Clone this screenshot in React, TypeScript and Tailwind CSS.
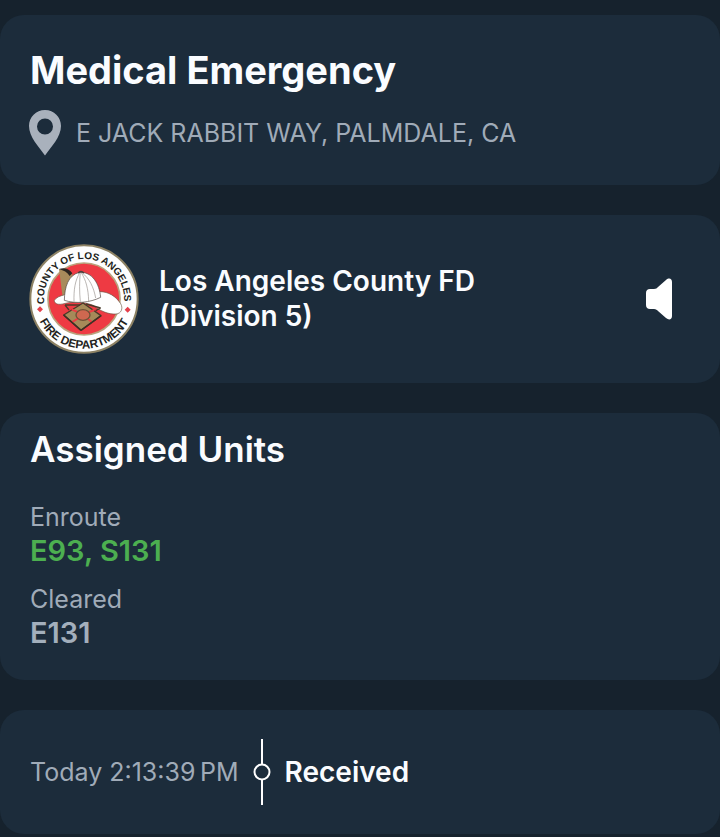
import type { ReactNode } from 'react';

const units = [
    { status: 'Enroute', names: 'E93, S131', color: 'text-[#4caf50]' },
    { status: 'Cleared', names: 'E131', color: 'text-[#a3afbc]' },
];

const Card = ({ children, className }: { children: ReactNode; className: string }) => (
    <section className={`rounded-3xl bg-[#1c2c3b] px-[30px] ${className}`}>{children}</section>
);

const PinIcon = () => (
    <svg viewBox="1 0 32 46" className="h-[46px] w-8 shrink-0 overflow-visible" fill="#a9b1bc" aria-hidden="true">
        <path
            fillRule="evenodd"
            d="M16 0C7 0 0 7 0 16c0 11 10 21 16 29.500C22 37 32 27 32 16 32 7 25 0 16 0Zm0 8.500a8 8 0 1 1 0 16 8 8 0 0 1 0-16Z"
        />
    </svg>
);

const SpeakerIcon = () => (
    <svg viewBox="0 0 28 42" className="h-[42px] w-7" fill="#fff" aria-hidden="true">
        <path d="M5 11h4c2 0 3-1 4-2l8-7c3-2.500 6-1.500 6 2v34c0 3.500-3 4.500-6 2l-8-7c-1-1-2-2-4-2H5c-2.500 0-4-1.500-4-4V15c0-2.500 1.500-4 4-4Z" />
    </svg>
);

const DepartmentSeal = () => (
    <svg viewBox="30 25 330 330" className="size-[110px] shrink-0 overflow-visible" role="img" aria-label="County of Los Angeles Fire Department">
        <defs>
            <path id="seal-top" d="M72 190a120 120 0 1 1 240 0a120 120 0 0 1-240 0" transform="rotate(-7 192 190)" />
            <path id="seal-bottom" d="M43 190a149 149 0 0 0 298 0" />
        </defs>
        <circle cx="192" cy="190" r="161" fill="#fefefe" stroke="#8d8264" strokeWidth="6" />
        <circle cx="192" cy="190" r="108" fill="#ee3a43" stroke="#b9a27c" strokeWidth="5" />
        <g fill="#231f20" fontFamily="Liberation Sans, Arial, sans-serif" fontWeight="700">
            <text fontSize="30">
                <textPath href="#seal-top">COUNTY OF LOS ANGELES</textPath>
            </text>
            <text fontSize="35" textAnchor="middle">
                <textPath href="#seal-bottom" startOffset="50%">FIRE DEPARTMENT</textPath>
            </text>
        </g>
        <path d="M60 212l9 9-9 9-9-9ZM323 213l9 9-9 9-9-9Z" fill="#e5404b" />

        {/* Helmet */}
        <path d="M117 100l27 4 14 13-17 78-12-2Z" fill="#a88b5b" />
        <path d="M117 100c15-5 30-2 40 13l-8 8c-7-11-18-17-32-21Z" fill="#2b2520" />
        <path d="M103 194c7-10 17-13 32-17l105-9c25 0 48 14 62 36 8 14 2 30-14 31-23 2-49-10-68-26-27-10-62-12-88-5-15 4-29 2-29-10Z" fill="#fff" stroke="#6c5947" strokeWidth="2" />
        <path d="M133 194c1-40 11-76 46-84 37-2 59 33 63 75-32 16-75 20-109 9Z" fill="#fff" stroke="#4b413d" strokeWidth="2" />
        <path d="M180 110c-15 24-19 52-18 88M181 110c-3 29-3 57 0 88M183 110c15 23 22 50 23 86M185 110c23 18 36 44 42 77" fill="none" stroke="#99928e" strokeWidth="2" />
        <path d="M174 112q9-8 18 0" fill="none" stroke="#4b413d" strokeWidth="5" />

        {/* Shield */}
        <path d="M131 238l58-36 54 38-60 44Z" fill="#a68a59" stroke="#4a3929" strokeWidth="4" strokeLinejoin="round" />
        <path d="M135 208h45M198 205l44 12M135 208l12 15M242 217l-15 8" fill="none" stroke="#4a3929" strokeWidth="4" />
        <path d="M155 221l20 9M223 223l-20 8M157 259l19-12M218 261l-16-13" stroke="#ee3a43" strokeWidth="6" />
        <path d="M131 238l52 46M183 284l60-44" stroke="#3f3024" strokeWidth="5" />
        <ellipse cx="189" cy="238" rx="21" ry="16" fill="#cf6850" stroke="#6e5136" strokeWidth="4" />
    </svg>
);

const App = () => {
    return (
        <main className="flex min-h-screen flex-col gap-[30px] bg-[#16222d] pt-[15px] pb-1 font-['Inter',sans-serif] text-[#fafcff]">
            <Card className="pt-[34px] pb-[29px]">
                <h1 className="text-[38px] leading-[42px] font-bold">Medical Emergency</h1>
                <div className="mt-[19px] flex items-center gap-[14px] text-[#a0abb8]">
                    <PinIcon />
                    <p className="text-[25px] leading-8">E JACK RABBIT WAY, PALMDALE, CA</p>
                </div>
            </Card>

            <Card className="flex items-center py-[29px]">
                <DepartmentSeal />
                <h2 className="ml-[19px] flex-1 text-[28px] leading-[35px] font-semibold">
                    Los Angeles County FD
                    <br />
                    (Division 5)
                </h2>
                <button type="button" aria-label="Play audio" className="mr-[17px]">
                    <SpeakerIcon />
                </button>
            </Card>

            <Card className="pt-[15px] pb-[30px]">
                <h2 className="text-[35px] leading-[42px] font-semibold">Assigned Units</h2>
                <dl className="mt-[30px] flex flex-col gap-[14px]">
                    {units.map((unit) => (
                        <div key={unit.status}>
                            <dt className="text-[25px] leading-[34px] text-[#a0abb8]">{unit.status}</dt>
                            <dd className={`text-[29px] leading-[34px] font-semibold ${unit.color}`}>{unit.names}</dd>
                        </div>
                    ))}
                </dl>
            </Card>

            {/* Timeline */}
            <Card className="flex items-center py-[29px]">
                <time className="text-[25px] leading-8 text-[#a0abb8]">Today 2:13:39&#8239;PM</time>
                <svg viewBox="0 0 18 66" className="mx-[14px] h-[66px] w-[18px]" fill="none" stroke="#fff" strokeWidth="2" aria-hidden="true">
                    <path d="M9 0v25M9 41v25" />
                    <circle cx="9" cy="33" r="7.500" />
                </svg>
                <p className="text-[28px] leading-8 font-semibold">Received</p>
            </Card>
        </main>
    );
};

export default App;
